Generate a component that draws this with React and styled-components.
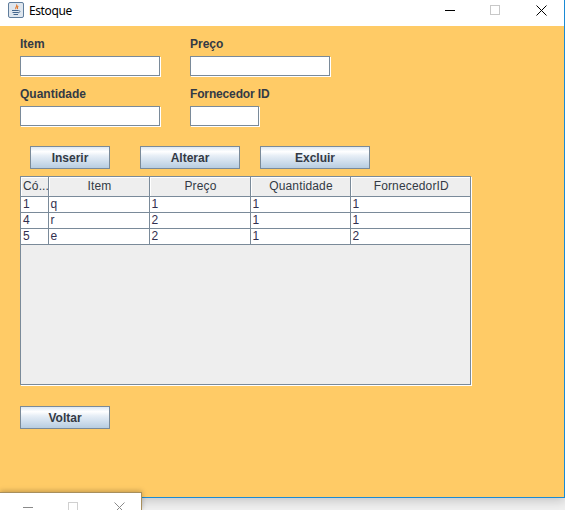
import React from 'react';
import styled, { createGlobalStyle } from 'styled-components';

const GlobalStyle = createGlobalStyle`
  html, body {
    margin: 0;
    padding: 0;
    background: #f0f0f0;
    overflow: hidden;
  }
`;

const Screen = styled.div`
  position: relative;
  width: 565px;
  height: 510px;
  overflow: hidden;
  background: linear-gradient(#e4e4e4, #f0f0f0 12px);
  font-family: "Liberation Sans", Arial, sans-serif;
`;

const Win = styled.div`
  box-sizing: border-box;
  width: 565px;
  height: 498px;
  display: flex;
  flex-direction: column;
  border-right: 1px solid #1a8ad4;
  border-bottom: 1px solid #1a8ad4;
  box-shadow: 0 3px 10px rgba(0, 0, 0, 0.18);
`;

const TitleBar = styled.div`
  box-sizing: border-box;
  height: 26px;
  flex: none;
  display: flex;
  align-items: center;
  background: #fff;
  padding: 0 0 6px 8px;
`;

const Title = styled.span`
  margin-left: 5px;
  font-size: 12px;
  letter-spacing: -0.4px;
  color: #000;
  font-family: "Noto Sans", "Liberation Sans", sans-serif;
`;

const Controls = styled.div`
  margin-left: auto;
  display: flex;
  align-items: center;
  gap: 35px;
  height: 11px;
  padding-right: ${p => p.$right}px;
`;

const Body = styled.div`
  flex: 1;
  background: #ffcb66;
  padding: 11px 0 0 20px;
  display: flex;
  flex-direction: column;
`;

const FormGrid = styled.div`
  display: grid;
  grid-template-columns: 140px 140px;
  column-gap: 30px;
`;

const Field = styled.div`
  display: flex;
  flex-direction: column;
  margin-bottom: ${p => p.$bottom}px;
`;

const Label = styled.label`
  height: 19px;
  line-height: 15px;
  font-size: 12px;
  font-weight: bold;
  letter-spacing: ${p => p.$spacing || 0}px;
  color: #333a45;
`;

const Input = styled.input`
  box-sizing: border-box;
  width: ${p => p.$width}px;
  height: 20px;
  margin: 0;
  padding: 0 3px;
  background: #fff;
  border: 1px solid #7a8a99;
  outline: 1px solid transparent;
  box-shadow: 1px 1px 0 #fff;
`;

const ButtonRow = styled.div`
  display: flex;
  padding-left: 10px;
  margin-top: 20px;
`;

const Button = styled.button`
  box-sizing: border-box;
  width: ${p => p.$width}px;
  height: 23px;
  margin: 0 ${p => p.$gap || 0}px 0 0;
  padding: 0;
  flex: none;
  border: 1px solid #7a8a99;
  background: linear-gradient(#dde8f3 0%, #ffffff 22%, #e6eef6 42%, #c9d9e9 78%, #b8cde0 100%);
  font-family: "Liberation Sans", Arial, sans-serif;
  font-size: 12px;
  font-weight: bold;
  color: #333a45;
`;

const TablePane = styled.div`
  box-sizing: border-box;
  width: 451px;
  height: 209px;
  margin-top: 7px;
  background: #eeeeee;
  border: 1px solid #7a8a99;
  box-shadow: 1px 1px 0 #fff;
`;

const Table = styled.table`
  border-collapse: collapse;
  table-layout: fixed;
  width: 449px;
  font-size: 12px;
  color: #333a45;
`;

const Th = styled.th`
  box-sizing: border-box;
  height: 19px;
  width: ${p => p.$width}px;
  padding: 0 0 0 2px;
  background: #eeeeee;
  font-weight: normal;
  letter-spacing: 0.15px;
  text-align: center;
  white-space: nowrap;
  overflow: hidden;
  border-right: 1px solid #7a8a99;
  border-bottom: 1px solid #7a8a99;
  box-shadow: inset 1px 1px 0 #fff;

  &:last-child {
    border-right: none;
  }
`;

const Td = styled.td`
  box-sizing: border-box;
  height: 16px;
  padding: 0 0 0 2px;
  background: #fff;
  color: #33304f;
  line-height: 14px;
  border-right: 1px solid #7a8a99;
  border-bottom: 1px solid #7a8a99;

  &:last-child {
    border-right: none;
  }
`;

const BackRow = styled.div`
  margin-top: 21px;
`;

const BehindWin = styled.div`
  position: absolute;
  left: 0;
  top: 492px;
  width: 142px;
  height: 18px;
  display: flex;
  align-items: flex-start;
  padding-top: 9px;
  background: #fff;
  border-top: 1px solid #a88f5c;
  border-right: 1px solid #a88f5c;
  box-sizing: border-box;
  box-shadow: 0 -1px 5px rgba(0, 0, 0, 0.25);
`;

const JavaIcon = () => (
  <svg width="16" height="16" viewBox="0 0 16 16">
    <rect x="0.5" y="0.5" width="15" height="15" rx="1.5" fill="#dfe6ee" stroke="#5f7d9c" />
    <path d="M8.5 2.5c1.5 1.8-1.8 2.6-.6 4.6M10.2 4c-1 .8-1.2 1.6-.6 3" fill="none" stroke="#e2762a" strokeWidth="1.1" />
    <path d="M4 8.5h6.5M4.5 10.5h6M5.5 12.5h4.5" stroke="#44668c" strokeWidth="1" fill="none" />
    <path d="M10.5 8.5c2 0 2 2-.5 2.4" stroke="#44668c" strokeWidth="0.8" fill="none" />
  </svg>
);

const WinControls = ({ color, frame, right }) => (
  <Controls $right={right}>
    <svg width="11" height="11" viewBox="0 0 11 11">
      <path d="M1 5.5h10" stroke={color} strokeWidth="1" />
    </svg>
    <svg width="11" height="11" viewBox="0 0 11 11">
      <rect x="0.5" y="0.5" width="9" height="9" fill="none" stroke={frame} />
    </svg>
    <svg width="11" height="11" viewBox="0 0 11 11">
      <path d="M0.5 0.5l10 10M10.5 0.5l-10 10" stroke={color} strokeWidth="1" />
    </svg>
  </Controls>
);

const columns = [
  { name: 'Có...', width: 27 },
  { name: 'Item', width: 101 },
  { name: 'Preço', width: 101 },
  { name: 'Quantidade', width: 100 },
  { name: 'FornecedorID', width: 120 },
];

const rows = [
  ['1', 'q', '1', '1', '1'],
  ['4', 'r', '2', '1', '1'],
  ['5', 'e', '2', '1', '2'],
];

const App = () => (
  <Screen>
    <GlobalStyle />
    <Win>
      <TitleBar>
        <JavaIcon />
        <Title>Estoque</Title>
        <WinControls color="#000" frame="#c8c8c8" right={17} />
      </TitleBar>
      <Body>
        <FormGrid>
          <Field $bottom={11}>
            <Label>Item</Label>
            <Input $width={140} />
          </Field>
          <Field $bottom={11}>
            <Label>Preço</Label>
            <Input $width={140} />
          </Field>
          <Field>
            <Label>Quantidade</Label>
            <Input $width={140} />
          </Field>
          <Field>
            <Label $spacing={-0.15}>Fornecedor ID</Label>
            <Input $width={69} />
          </Field>
        </FormGrid>
        <ButtonRow>
          <Button $width={80} $gap={30}>Inserir</Button>
          <Button $width={100} $gap={20}>Alterar</Button>
          <Button $width={110}>Excluir</Button>
        </ButtonRow>
        <TablePane>
          <Table>
            <thead>
              <tr>
                {columns.map(col => (
                  <Th key={col.name} $width={col.width}>{col.name}</Th>
                ))}
              </tr>
            </thead>
            <tbody>
              {rows.map(row => (
                <tr key={row[0]}>
                  {row.map((cell, i) => (
                    <Td key={i}>{cell}</Td>
                  ))}
                </tr>
              ))}
            </tbody>
          </Table>
        </TablePane>
        <BackRow>
          <Button $width={90}>Voltar</Button>
        </BackRow>
      </Body>
    </Win>
    <BehindWin>
      <WinControls color="#8a8a8a" frame="#d0d0d0" right={16} />
    </BehindWin>
  </Screen>
);

export default App;
